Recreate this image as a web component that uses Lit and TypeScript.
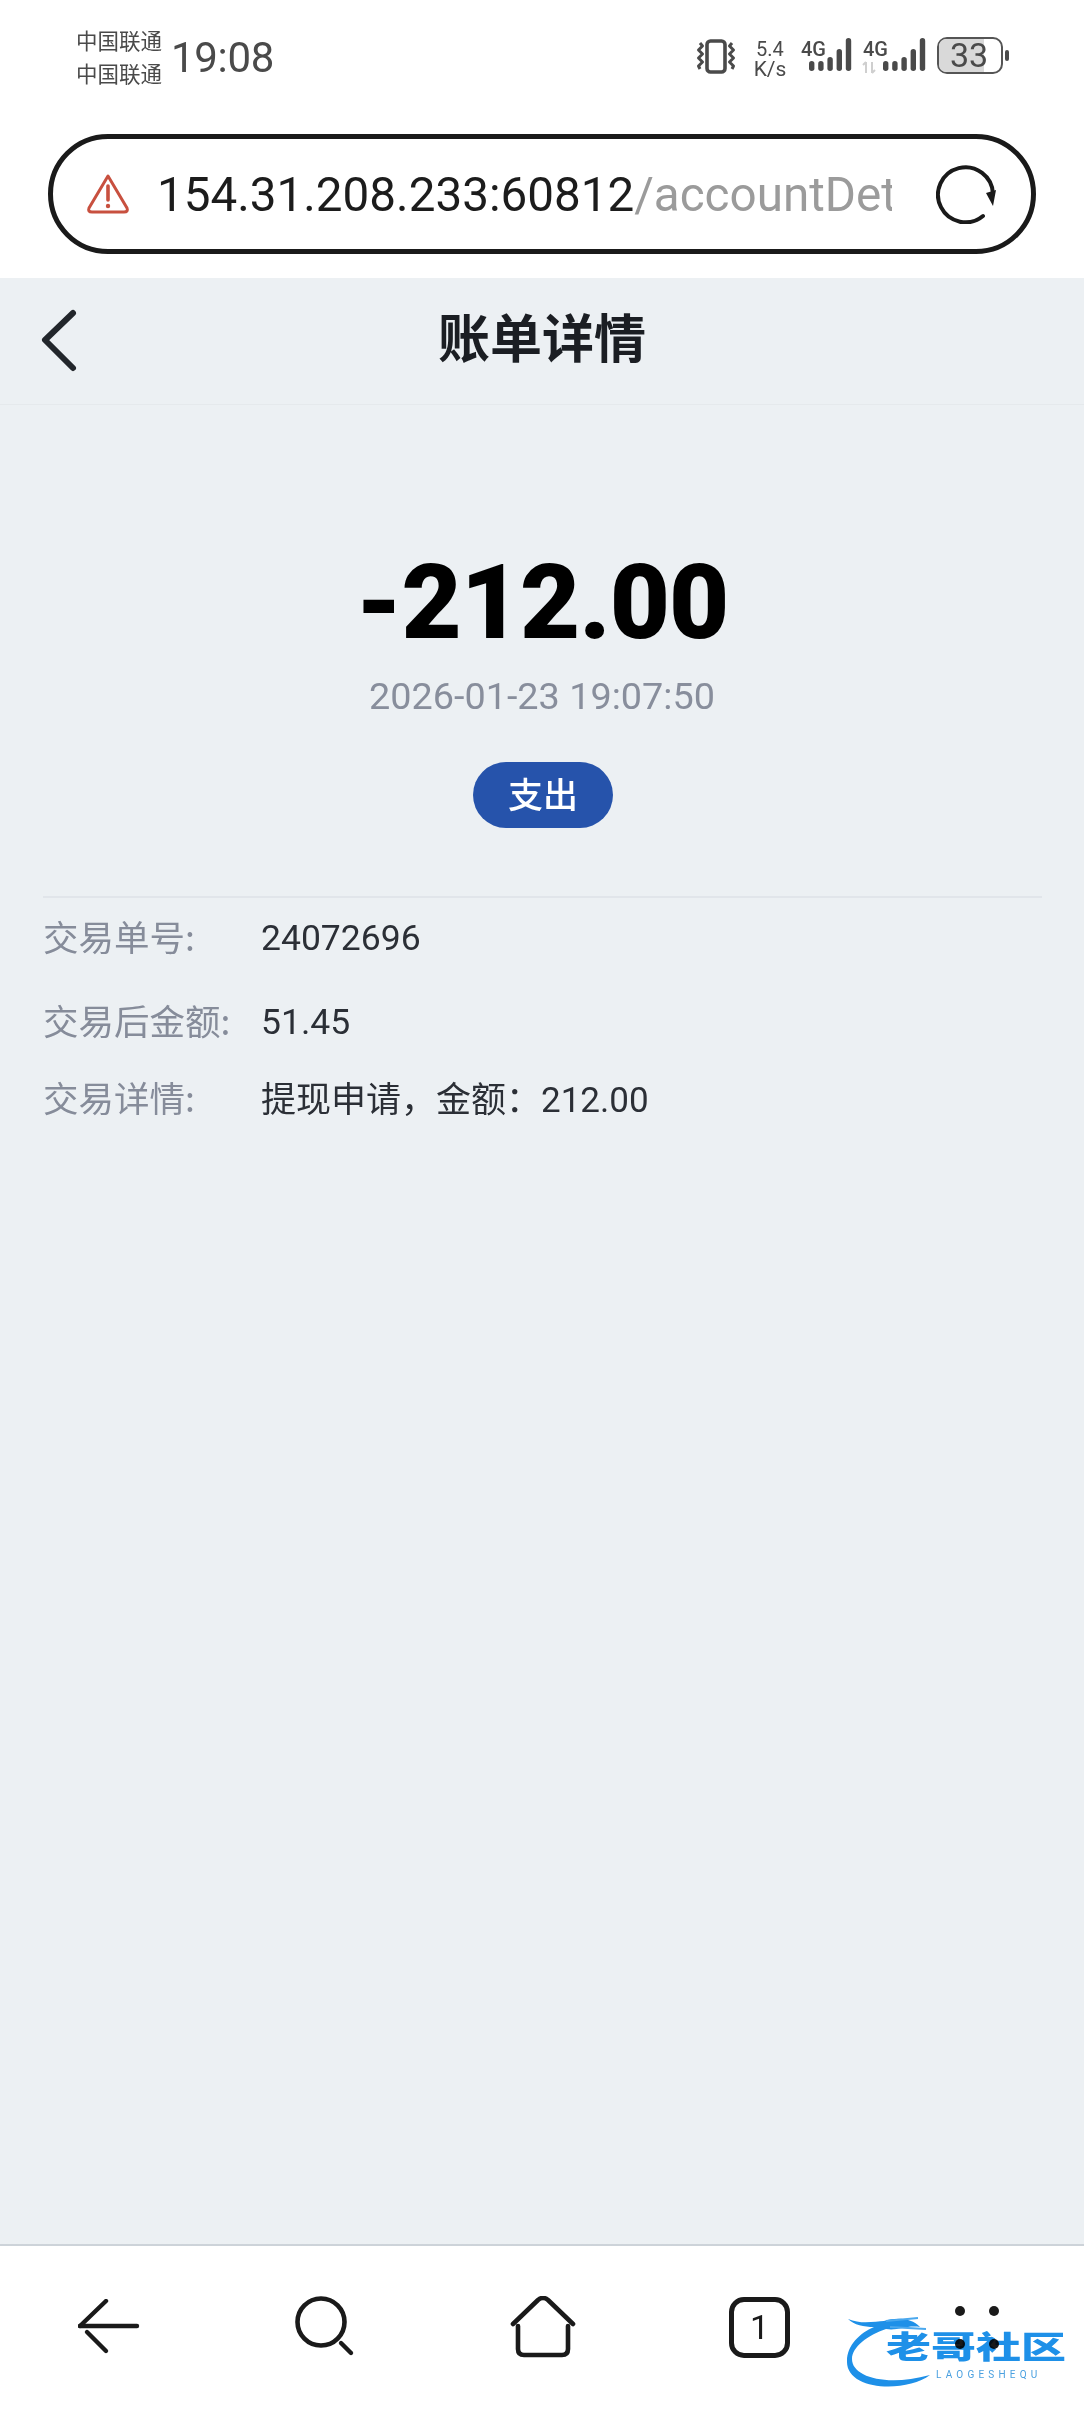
import { LitElement, html, css, svg } from 'lit';
import { customElement } from 'lit/decorators.js';

const DETAILS = [
  { label: '交易单号:', value: '24072696', cls: 'first' },
  { label: '交易后金额:', value: '51.45', cls: 'second' },
  { label: '交易详情:', value: '提现申请，金额：212.00', cls: 'third' },
];

// signal bars, x offsets are relative to the icon's own box
const signalBars = (x0: number) =>
  [10, 10, 14, 22, 33].map(
    (h, i) => svg`<rect x=${x0 + i * 9.2} y=${35 - h} width="5.4" height=${h} rx="2.7" fill="#4a4a4a"></rect>`
  );

@customElement('app-root')
export class AppRoot extends LitElement {
  static styles = css`
    :host {
      display: block;
      width: 1084px;
      height: 2412px;
      font-family: Roboto, 'Noto Sans CJK SC', sans-serif;
    }
    .page {
      display: flex;
      flex-direction: column;
      width: 1084px;
      height: 2412px;
      background: #fff;
      overflow: hidden;
    }

    /* phone status bar */
    .status {
      display: flex;
      align-items: center;
      height: 114px;
      padding-left: 76px;
      color: #4a4a4a;
      flex: none;
    }
    .carriers {
      display: flex;
      flex-direction: column;
      font-family: 'Noto Sans CJK SC', sans-serif;
      font-size: 21.5px;
      line-height: 33px;
      width: 95px;
      margin-top: -2px;
    }
    .time {
      font-size: 42px;
      line-height: 50px;
      letter-spacing: -0.3px;
      margin-top: 2px;
    }
    .status-icons {
      display: flex;
      margin-left: auto;
      margin-right: 70px;
      margin-top: 2px;
    }
    .status-icons svg {
      display: block;
    }
    .status-icons text {
      font-family: Roboto, sans-serif;
      fill: #4a4a4a;
    }

    /* browser address bar */
    .address {
      display: flex;
      align-items: center;
      flex: none;
      box-sizing: border-box;
      width: 988px;
      height: 120px;
      margin: 20px 0 24px 48px;
      padding: 0 35px 0 33px;
      border: 5px solid #1a1a1a;
      border-radius: 60px;
    }
    .warn {
      flex: none;
      width: 44px;
      height: 42px;
      margin-right: 27px;
    }
    .url {
      width: 735px;
      overflow: hidden;
      white-space: nowrap;
      font-size: 47.6px;
      line-height: 60px;
      color: #1c1c1c;
      margin-top: 1px;
    }
    .url span {
      color: #9b9b9b;
    }
    .reload {
      flex: none;
      width: 60px;
      height: 60px;
      margin-left: auto;
    }

    /* web page */
    .content {
      flex: 1;
      display: flex;
      flex-direction: column;
      background: #ecf0f3;
    }
    .nav {
      position: relative;
      display: flex;
      align-items: center;
      justify-content: center;
      flex: none;
      height: 126px;
      border-bottom: 1px solid #e5e9ec;
    }
    .nav-back {
      position: absolute;
      left: 40px;
      top: 30px;
      width: 40px;
      height: 66px;
    }
    .title {
      font-family: 'Noto Sans CJK SC', sans-serif;
      font-size: 52px;
      line-height: 60px;
      font-weight: 700;
      color: #1b1e23;
      margin-top: -10px;
    }
    .summary {
      display: flex;
      flex-direction: column;
      align-items: center;
      padding-top: 140px;
    }
    .amount {
      font-size: 104px;
      line-height: 116px;
      font-weight: 900;
      letter-spacing: -1px;
      color: #000;
    }
    .date {
      margin-top: 13px;
      font-size: 37.8px;
      line-height: 44px;
      color: #888e9c;
    }
    .pill {
      display: flex;
      align-items: center;
      justify-content: center;
      box-sizing: border-box;
      width: 140px;
      height: 66px;
      margin: 44px 0 0 2px;
      padding-bottom: 6px;
      border-radius: 33px;
      background: #2653ab;
      color: #fff;
      font-family: 'Noto Sans CJK SC', sans-serif;
      font-size: 35px;
      font-weight: 500;
    }
    .details {
      margin: 68px 42px 0 43px;
      border-top: 2px solid #e1e5ea;
      padding-top: 17px;
    }
    .row {
      display: flex;
      font-size: 35.5px;
      line-height: 46px;
    }
    .row.second {
      margin-top: 38px;
    }
    .row.third {
      margin-top: 31px;
    }
    .row.third .value {
      font-size: 35px;
      margin-top: 2px;
    }
    .label {
      width: 218px;
      flex: none;
      margin-top: -2px;
      color: #868c9a;
      font-family: 'Noto Sans CJK SC', sans-serif;
    }
    .value {
      color: #2b2f36;
      font-family: Roboto, 'Noto Sans CJK SC', sans-serif;
    }

    /* browser toolbar */
    .toolbar {
      position: relative;
      display: grid;
      grid-template-columns: repeat(5, 217px);
      justify-items: center;
      align-items: center;
      flex: none;
      box-sizing: border-box;
      height: 168px;
      border-top: 2px solid #cdd3d9;
      background: #fff;
    }
    .tool {
      display: block;
      margin-top: -4px;
    }
    .tabs {
      display: flex;
      align-items: center;
      justify-content: center;
      box-sizing: border-box;
      width: 61px;
      height: 61px;
      margin-top: -4px;
      border: 5px solid #1a1a1a;
      border-radius: 15px;
      font-size: 34px;
      color: #1a1a1a;
    }
    .more {
      display: grid;
      grid-template-columns: 10px 10px;
      gap: 23px 24px;
      margin-top: -4px;
    }
    .more i {
      width: 10px;
      height: 10px;
      border-radius: 50%;
      background: #1a1a1a;
    }

    /* forum watermark stamped over the toolbar */
    .mark {
      position: absolute;
      left: 846px;
      top: 69px;
      width: 226px;
      height: 74px;
      color: #1e90e8;
      mix-blend-mode: multiply;
    }
    .mark svg {
      position: absolute;
      left: 0;
      top: 0;
    }
    .mark-name {
      position: absolute;
      left: 40px;
      top: 13px;
      font-family: 'Noto Sans CJK SC', sans-serif;
      font-size: 45px;
      line-height: 50px;
      font-weight: 900;
      white-space: nowrap;
      transform: scaleY(0.68);
      transform-origin: top left;
      filter: blur(0.5px);
    }
    .mark-sub {
      position: absolute;
      left: 90px;
      top: 54px;
      font-size: 10px;
      line-height: 12px;
      letter-spacing: 4.2px;
      white-space: nowrap;
      color: #4aa0e0;
    }
  `;

  render() {
    return html`
      <div class="page">
        <div class="status">
          <div class="carriers"><span>中国联通</span><span>中国联通</span></div>
          <div class="time">19:08</div>
          <div class="status-icons">${this.renderStatusIcons()}</div>
        </div>

        <div class="address">
          <svg class="warn" viewBox="0 0 44 42" fill="none" stroke="#c8503f">
            <path d="M22 3 L41 35 Q42.5 39 38 39 L6 39 Q1.5 39 3 35 Z" stroke-width="3" stroke-linejoin="round"></path>
            <path d="M22 13 V27" stroke-width="3.6" stroke-linecap="round"></path>
            <circle cx="22" cy="33" r="2.2" fill="#c8503f" stroke="none"></circle>
          </svg>
          <div class="url">154.31.208.233:60812<span>/accountDet</span></div>
          <svg class="reload" viewBox="0 0 60 60" fill="none" stroke="#1a1a1a">
            <path d="M47 52 A27.5 27.5 0 1 1 57 30" stroke-width="4" stroke-linecap="round"></path>
            <path d="M50 29 L60 26 L57 42 Z" fill="#1a1a1a" stroke="none"></path>
          </svg>
        </div>

        <div class="content">
          <div class="nav">
            <svg class="nav-back" viewBox="0 0 40 66" fill="none" stroke="#22262b" stroke-width="6" stroke-linecap="round" stroke-linejoin="round">
              <path d="M33 5 L5 32 L33 60"></path>
            </svg>
            <div class="title">账单详情</div>
          </div>

          <div class="summary">
            <div class="amount">-212.00</div>
            <div class="date">2026-01-23 19:07:50</div>
            <div class="pill">支出</div>
          </div>

          <div class="details">
            ${DETAILS.map(
              d => html`<div class="row ${d.cls}">
                <div class="label">${d.label}</div>
                <div class="value">${d.value}</div>
              </div>`
            )}
          </div>
        </div>

        <div class="toolbar">${this.renderToolbar()}</div>
      </div>
    `;
  }

  private renderStatusIcons() {
    return html`
      <svg width="318" height="44" viewBox="0 0 318 44">
        <!-- vibrate -->
        <rect x="11" y="5" width="18" height="31" rx="3.5" fill="none" stroke="#4a4a4a" stroke-width="3.6"></rect>
        <path d="M4 7 L6.5 10 L2.5 14 L6.5 18 L2.5 22 L6.5 26 L2.5 30 L4 33" fill="none" stroke="#4a4a4a" stroke-width="3" stroke-linejoin="round"></path>
        <path d="M36 7 L33.5 10 L37.5 14 L33.5 18 L37.5 22 L33.5 26 L37.5 30 L36 33" fill="none" stroke="#4a4a4a" stroke-width="3" stroke-linejoin="round"></path>
        <!-- net speed -->
        <text x="74" y="20" font-size="20" text-anchor="middle">5.4</text>
        <text x="74" y="40" font-size="21" text-anchor="middle">K/s</text>
        <!-- sim 1 -->
        <text x="105" y="20" font-size="20" font-weight="500" textLength="25" lengthAdjust="spacingAndGlyphs">4G</text>
        ${signalBars(113)}
        <!-- sim 2 -->
        <text x="167" y="20" font-size="20" font-weight="500" textLength="25" lengthAdjust="spacingAndGlyphs">4G</text>
        <path d="M170 37 V26 M170 26 L167 29 M176 26 V37 M176 37 L179 34" stroke="#cfcfcf" stroke-width="2" fill="none"></path>
        ${signalBars(187)}
        <!-- battery -->
        <rect x="242" y="2" width="64" height="35" rx="9" fill="none" stroke="#555" stroke-width="2"></rect>
        <path d="M251 3 H288 V36 H251 Q243 36 243 28 V11 Q243 3 251 3 Z" fill="#d9d9d9"></path>
        <text x="273" y="31" font-size="34" text-anchor="middle">33</text>
        <rect x="309" y="14" width="4" height="11" rx="2" fill="#4a4a4a"></rect>
      </svg>
    `;
  }

  private renderToolbar() {
    return html`
      <svg class="tool" width="62" height="56" viewBox="0 0 62 56" fill="none" stroke="#1a1a1a" stroke-width="4.4" stroke-linecap="round">
        <path d="M2 27 H59"></path>
        <path d="M2 27 L28 2"></path>
        <path d="M9 33 L28 52"></path>
      </svg>
      <svg class="tool" width="62" height="62" viewBox="0 0 62 62" fill="none" stroke="#1a1a1a" stroke-linecap="round">
        <circle cx="26" cy="26" r="23.5" stroke-width="4.6"></circle>
        <path d="M46 47 L56 57" stroke-width="4.4"></path>
      </svg>
      <svg class="tool" width="66" height="62" viewBox="0 0 66 62" fill="none" stroke="#1a1a1a" stroke-width="4.6" stroke-linecap="round" stroke-linejoin="round">
        <path d="M3 28 L28 4 Q33 0 38 4 L63 28"></path>
        <path d="M8 30 V53 Q8 59 14 59 H52 Q58 59 58 53 V30"></path>
      </svg>
      <div class="tabs">1</div>
      <div class="more"><i></i><i></i><i></i><i></i></div>
      <div class="mark">
        <svg width="226" height="74" viewBox="0 0 226 74">
          <path d="M2 4 C16 10 30 6 38 6 C50 2 66 3 74 12 C60 10 52 16 40 14 C22 20 6 32 6 44 C6 62 40 72 84 60 C60 78 0 76 1 46 C1 30 14 18 28 12 C18 12 8 10 2 4 Z" fill="#1e90e8"></path>
          <path d="M40 6 L72 3 M44 12 L80 14" stroke="#4aa8ee" stroke-width="2" fill="none"></path>
        </svg>
        <div class="mark-name">老哥社区</div>
        <div class="mark-sub">LAOGESHEQU</div>
      </div>
    `;
  }
}
